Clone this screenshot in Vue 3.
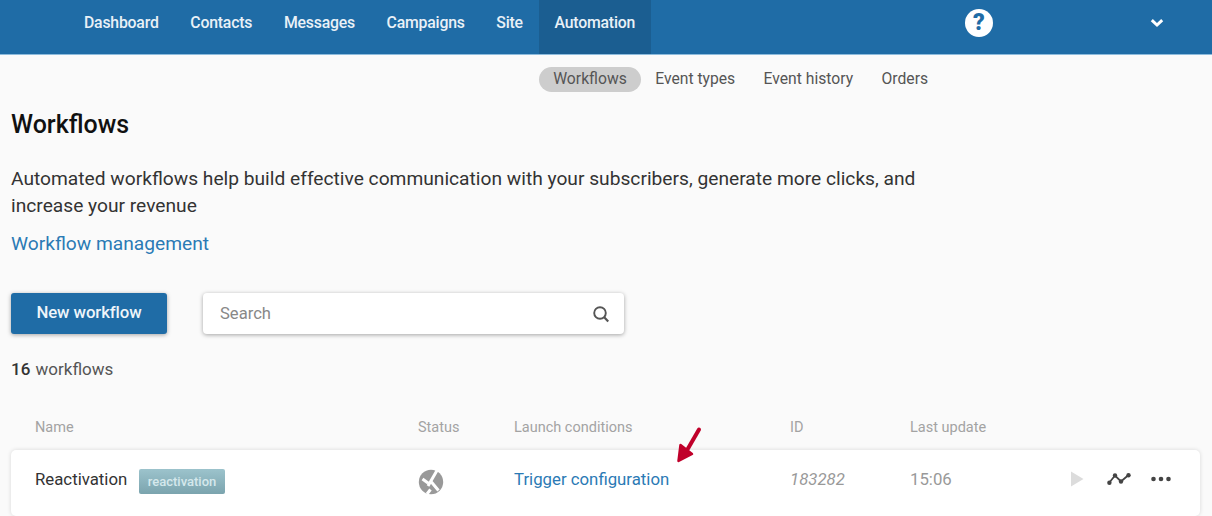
<script setup>
const navItems = [
  { label: 'Dashboard' },
  { label: 'Contacts' },
  { label: 'Messages' },
  { label: 'Campaigns' },
  { label: 'Site' },
  { label: 'Automation', active: true },
]
const subItems = [
  { label: 'Workflows', active: true },
  { label: 'Event types' },
  { label: 'Event history' },
  { label: 'Orders' },
]
</script>

<template>
  <div class="page">
    <header class="topbar">
      <nav class="nav">
        <a v-for="item in navItems" :key="item.label" class="nav-item" :class="{ active: item.active }">{{ item.label }}</a>
      </nav>
      <div class="help">?</div>
      <svg class="chevron" width="14" height="10" viewBox="0 0 14 10">
        <path d="M1.800 2.200 L7 7 L12.200 2.200" fill="none" stroke="#fff" stroke-width="3" />
      </svg>
    </header>

    <div class="subnav">
      <a v-for="item in subItems" :key="item.label" class="sub-item" :class="{ active: item.active }">{{ item.label }}</a>
    </div>

    <main class="content">
      <h1 class="title">Workflows</h1>
      <p class="lead">Automated workflows help build effective communication with your subscribers, generate more clicks, and increase your revenue</p>
      <a class="manage">Workflow management</a>

      <div class="toolbar">
        <button class="primary">New workflow</button>
        <div class="search">
          <span class="placeholder">Search</span>
          <svg width="18" height="18" viewBox="0 0 18 18">
            <circle cx="8" cy="8" r="5.800" fill="none" stroke="#555" stroke-width="1.900" />
            <path d="M12 12 L16.200 16.400" stroke="#555" stroke-width="2.200" />
          </svg>
        </div>
      </div>

      <div class="count"><b>16</b> workflows</div>

      <div class="table-head cols">
        <span>Name</span>
        <span>Status</span>
        <span>Launch conditions</span>
        <span>ID</span>
        <span>Last update</span>
      </div>

      <div class="row cols">
        <div class="name">
          <span>Reactivation</span>
          <span class="tag">reactivation</span>
        </div>
        <svg class="status" width="26" height="26" viewBox="0 0 26 26">
          <circle cx="13" cy="13" r="12.200" fill="#999" />
          <path d="M19 1.500 L10 17 M4.500 10 L10 14 M13 12.500 L20.500 21.500 M12.500 20.500 L9 25" fill="none" stroke="#fff" stroke-width="3" />
        </svg>
        <a class="trigger">Trigger configuration</a>
        <span class="id">183282</span>
        <span class="time">15:06</span>
        <div class="actions">
          <svg class="play" width="14" height="16" viewBox="0 0 14 16"><path d="M1 0.500 L13.500 8 L1 15.500 Z" fill="#dcdcdc" /></svg>
          <svg width="24" height="14" viewBox="0 0 24 14">
            <path d="M2 11 L8 3.500 L14 9.500 L21.500 3" fill="none" stroke="#444" stroke-width="1.800" />
            <circle cx="2.400" cy="10.800" r="2.200" fill="#444" /><circle cx="8" cy="3.500" r="2.200" fill="#444" />
            <circle cx="14" cy="9.500" r="2.200" fill="#444" /><circle cx="21.500" cy="3.200" r="2.200" fill="#444" />
          </svg>
          <svg width="22" height="6" viewBox="0 0 22 6">
            <circle cx="2.500" cy="3" r="2.300" fill="#444" /><circle cx="10" cy="3" r="2.300" fill="#444" /><circle cx="17.500" cy="3" r="2.300" fill="#444" />
          </svg>
        </div>
      </div>
    </main>

    <svg class="arrow" width="28" height="38" viewBox="0 0 28 38">
      <path d="M24 3.500 L11 26" fill="none" stroke="#c0002a" stroke-width="4" stroke-linecap="round" />
      <path d="M5.500 19 L3.500 35 L17 28 Z" fill="#c0002a" stroke="#c0002a" stroke-width="2.500" stroke-linejoin="round" />
    </svg>
  </div>
</template>

<style>
html, body { margin: 0; background: #fafafa; overflow: hidden; }
</style>

<style scoped>
.page {
  position: relative;
  width: 1212px;
  height: 516px;
  overflow: hidden;
  background: #fafafa;
  font-family: Roboto, "Liberation Sans", sans-serif;
  color: #333;
}
.topbar {
  height: 54px;
  background: #1f6ca6;
  border-bottom: 1px solid #8dbbdc;
  display: flex;
  align-items: stretch;
  padding-left: 68.150px;
}
.nav { display: flex; }
.nav-item {
  display: flex;
  align-items: center;
  padding: 0 15.850px 9px;
  color: #e9f1f7;
  font-size: 15.800px;
  font-weight: 500;
  letter-spacing: -0.2px;
}
.nav-item.active { background: #1b5e91; }
.help {
  width: 28px;
  height: 28px;
  margin: 9px 0 0 314px;
  border-radius: 50%;
  background: #fff;
  color: #1f6ca6;
  font-size: 23px;
  font-weight: 900;
  line-height: 28px;
  text-align: center;
}
.chevron { margin: 18px 0 0 157px; }
.subnav {
  display: flex;
  align-items: center;
  height: 25px;
  margin-top: 12px;
  padding-left: 539px;
}
.sub-item {
  padding: 0 14.200px 1px;
  line-height: 24px;
  font-size: 15.700px;
  color: #555;
  border-radius: 13px;
}
.sub-item.active { background: #cdcdcd; }
.content { padding: 0 11px; }
.title {
  margin: 18px 0 0;
  font-size: 25px;
  line-height: 30px;
  font-weight: 500;
  color: #111;
}
.lead {
  width: 915px;
  margin: 26px 0 0;
  font-size: 19.200px;
  line-height: 26.500px;
  color: #333;
}
.manage {
  display: block;
  margin-top: 12px;
  font-size: 19.200px;
  line-height: 26px;
  color: #2b7ab5;
}
.toolbar {
  display: flex;
  align-items: center;
  gap: 36px;
  margin-top: 36px;
}
.primary {
  width: 156px;
  height: 41px;
  border: 0;
  padding: 0 0 3px;
  border-radius: 3px;
  background: #1f6ca6;
  color: #eef5fa;
  font: 500 16.800px Roboto, sans-serif;
  letter-spacing: -0.1px;
  box-shadow: 0 1px 4px rgba(0, 0, 0, 0.35);
}
.search {
  width: 421px;
  height: 41px;
  box-sizing: border-box;
  display: flex;
  align-items: center;
  justify-content: space-between;
  padding: 0 14px 0 17px;
  background: #fff;
  border-radius: 4px;
  box-shadow: 0 1px 4px rgba(0, 0, 0, 0.35);
}
.placeholder { font-size: 16.600px; color: #888; }
.count {
  margin-top: 24px;
  font-size: 17px;
  line-height: 22px;
  color: #555;
}
.count b { font-weight: 500; color: #333; margin-right: 1px; }
.cols {
  display: grid;
  grid-template-columns: 383px 96px 276px 120px 130px 1fr;
  align-items: center;
  padding-left: 24px;
}
.table-head {
  margin-top: 36px;
  height: 22px;
  font-size: 14.500px;
  color: #a3a3a3;
}
.row {
  position: relative;
  width: 1189px;
  height: 66px;
  box-sizing: border-box;
  margin-top: 12px;
  background: #fff;
  border-radius: 5px;
  box-shadow: 0 0 4px rgba(0, 0, 0, 0.14);
  font-size: 16.800px;
  padding-bottom: 8px;
}
.name { display: flex; align-items: center; gap: 11.500px; color: #333; }
.tag {
  height: 25px;
  padding: 0 9px;
  line-height: 25px;
  margin-top: 4px;
  font-size: 13px;
  font-weight: 500;
  color: #d5e8ec;
  border-radius: 2px;
  background: linear-gradient(#9cc3cc, #7ba4ae);
}
.status { margin-top: 6px; }
.trigger { color: #2b7ab5; }
.id { font-style: italic; color: #999; }
.time { color: #999; }
.actions {
  display: flex;
  align-items: center;
  gap: 20px;
  padding-left: 30px;
}
.play { margin-right: 3px; }
.arrow { position: absolute; left: 675px; top: 426px; }
</style>
